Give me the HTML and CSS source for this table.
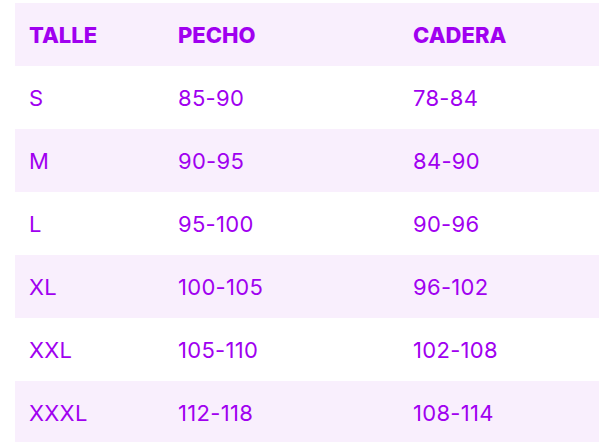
FILE: index.html
```html
<!DOCTYPE html>
<html lang="es">
<head>
<meta charset="utf-8">
<link rel="stylesheet" href="styles.css">
</head>
<body>
<table class="sizes">
  <thead>
    <tr><th class="c1">TALLE</th><th class="c2">PECHO</th><th class="c3">CADERA</th></tr>
  </thead>
  <tbody>
    <tr><td>S</td><td>85-90</td><td>78-84</td></tr>
    <tr><td>M</td><td>90-95</td><td>84-90</td></tr>
    <tr><td>L</td><td>95-100</td><td>90-96</td></tr>
    <tr><td>XL</td><td>100-105</td><td>96-102</td></tr>
    <tr><td>XXL</td><td>105-110</td><td>102-108</td></tr>
    <tr><td>XXXL</td><td>112-118</td><td>108-114</td></tr>
  </tbody>
</table>
</body>
</html>
```
FILE: styles.css
```css
html, body {
  margin: 0;
  padding: 0;
  background: #ffffff;
}
body {
  padding: 3px 1px 0 15px;
  font-family: "Inter", "Liberation Sans", sans-serif;
  color: #a000f0;
}
.sizes {
  width: 584px;
  border-collapse: collapse;
  table-layout: fixed;
}
.sizes th, .sizes td {
  height: 63px;
  padding: 0 0 0 14px;
  text-align: left;
  vertical-align: middle;
  box-sizing: border-box;
}
.sizes th {
  font-weight: 800;
  font-size: 22px;
  background: #f9effd;
}
.sizes td {
  font-weight: 400;
  font-size: 22px;
  letter-spacing: 0.3px;
}
.sizes tbody tr:nth-child(even) td {
  background: #f9effd;
}
.c1 { width: 149px; }
.c2 { width: 235px; }
.c3 { width: 200px; }
```
